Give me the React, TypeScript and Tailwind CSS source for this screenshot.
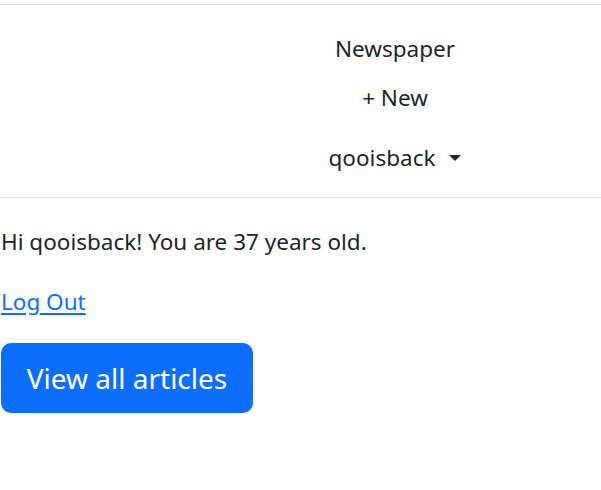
export default function App() {
  const font = { fontFamily: '"Noto Sans", "Open Sans", Arial, sans-serif' };
  return (
    <div className="w-[601px] h-[490px] bg-white text-[#212529] text-[22.5px]" style={font}>
      <div className="h-[4px]" />
      <nav className="border-t border-b border-[#dee2e6] h-[194px] flex flex-col items-center pl-[189px]">
        <a className="mt-[24px] leading-[40px]">Newspaper</a>
        <a className="mt-[9px] leading-[40px]">+ New</a>
        <a className="mt-[20px] leading-[40px] flex items-center">
          qooisback
          <span className="ml-[14px] inline-block w-0 h-0 border-l-[6px] border-r-[6px] border-t-[6px] border-l-transparent border-r-transparent border-t-[#212529]" />
        </a>
      </nav>
      <div className="pl-[1px]">
        <p className="mt-[29px] leading-[30px]">Hi qooisback! You are 37 years old.</p>
        <p className="mt-[30px] leading-[30px]">
          <a className="text-[#0d6efd] underline underline-offset-[3px]" href="#">Log Out</a>
        </p>
        <button className="mt-[26px] w-[252px] h-[70px] rounded-[10px] bg-[#0d6efd] text-white text-[28px]">
          View all articles
        </button>
      </div>
    </div>
  );
}
